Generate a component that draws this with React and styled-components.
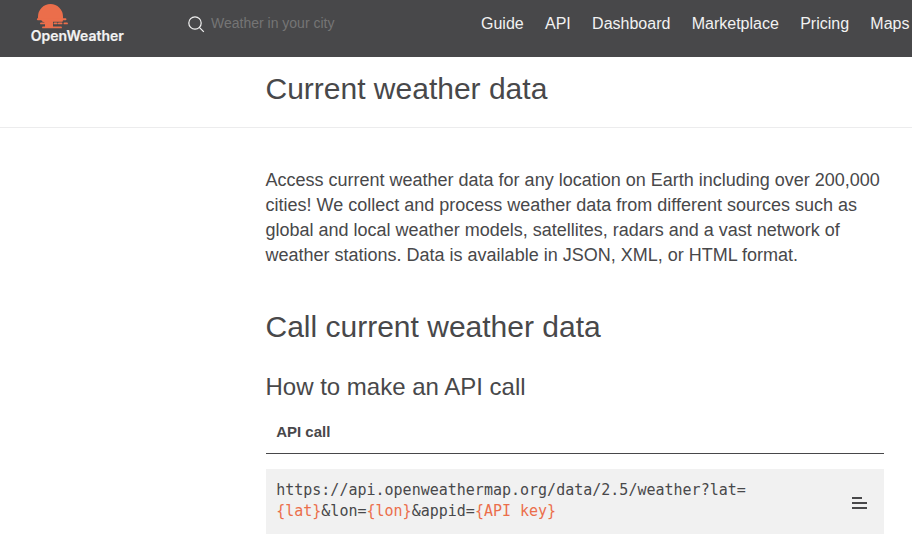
import React from "react";
import styled, { createGlobalStyle } from "styled-components";

const GlobalStyle = createGlobalStyle`
  * { box-sizing: border-box; }
  body { margin: 0; background: #fff; color: #48484a; font-family: "Liberation Sans", Arial, sans-serif; overflow: hidden; }
  h1, h2, h3, p, pre { margin: 0; font-weight: 400; }
`;
const Header = styled.header`
  display: flex; align-items: flex-start; width: 912px; height: 57px; background: #48484a; overflow: hidden;
`;
const Logo = styled.a`
  display: block; width: 100px; height: 52px; margin-left: 30px; flex: none;
  svg { display: block; overflow: visible; }
`;
const Search = styled.div`
  display: flex; gap: 6px; margin: 15px 0 0 58px; width: 293px; flex: none;
  svg { display: block; margin-top: 1px; }
`;
const Placeholder = styled.span`
  font-size: 14px; line-height: 16px; color: #757575;
`;
const Nav = styled.nav`
  display: flex; flex: none; gap: 21.3px; padding-top: 15px;
`;
const NavLink = styled.a`
  color: #f2f2f2; font-size: 16px; line-height: 18px; white-space: nowrap;
`;
const TitleBar = styled.div`
  height: 71px; padding: 14px 0 0 265.5px; border-bottom: 1px solid #ececed;
`;
const Title = styled.h1`
  font-size: 30px; line-height: 36px;
`;
const Content = styled.main`
  width: 618.5px; margin: 40px 0 0 265.5px;
`;
const Intro = styled.p`
  font-size: 18px; line-height: 25px; white-space: pre;
`;
const Section = styled.h2`
  font-size: 30px; line-height: 36px; margin-top: 41px;
`;
const SubSection = styled.h3`
  font-size: 24px; line-height: 30px; margin-top: 27px;
`;
const Tab = styled.div`
  height: 51px; margin-top: 1px; padding: 20px 10.7px 0; border-bottom: 1px solid #48484a;
  font-size: 15px; line-height: 17px; font-weight: 700;
`;
const CodeBlock = styled.div`
  display: flex; justify-content: space-between; height: 65px; margin-top: 15px; padding: 11px 17px 0 10.7px; background: #f1f1f1;
  svg { display: block; margin-top: 17px; }
`;
const Code = styled.pre`
  font-family: "DejaVu Sans Mono", monospace; font-size: 15px; line-height: 21px;
`;
const Param = styled.span`
  color: #eb6e4b;
`;

const links = ["Guide", "API", "Dashboard", "Marketplace", "Pricing", "Maps"];

export default function App() {
  return (
    <>
      <GlobalStyle />
      <Header>
        <Logo>
          <svg width="100" height="52" viewBox="0 0 100 52">
            <path fill="#eb6e4b" d="M8 18.500v-2a12.500 12.500 0 0 1 25 0v2l-1 2.500h-9v6h-8v-4l-4-3z" />
            <g stroke="#eb6e4b" strokeWidth="1.900" strokeLinecap="round" fill="none">
              <path d="M7.800 19.300H35.500M13 20.800H32M11 23.400h11M24.500 23.400h2.200M28.800 23.400h2.700M34.500 23.400h2.500M13 27.400h18" />
            </g>
            <text x="0.800" y="41" fill="#f2f2f2" stroke="#f2f2f2" strokeWidth=".2" fontFamily="Inter" fontSize="14.600" fontWeight="600" textLength="93" lengthAdjust="spacingAndGlyphs">OpenWeather</text>
          </svg>
        </Logo>
        <Search>
          <svg width="17" height="17" viewBox="0 0 17 17" fill="none" stroke="#f2f2f2" strokeWidth="1.2">
            <circle cx="7" cy="7" r="6.2" /><path d="m11.300 11.300 4.500 4.500" />
          </svg>
          <Placeholder>Weather in your city</Placeholder>
        </Search>
        <Nav>{links.map((l) => <NavLink key={l}>{l}</NavLink>)}</Nav>
      </Header>
      <TitleBar><Title>Current weather data</Title></TitleBar>
      <Content>
        <Intro>{`Access current weather data for any location on Earth including over 200,000
cities! We collect and process weather data from different sources such as
global and local weather models, satellites, radars and a vast network of
weather stations. Data is available in JSON, XML, or HTML format.`}</Intro>
        <Section>Call current weather data</Section>
        <SubSection>How to make an API call</SubSection>
        <Tab>API call</Tab>
        <CodeBlock>
          <Code>
            {"https://api.openweathermap.org/data/2.5/weather?lat=\n"}
            <Param>{"{lat}"}</Param>&amp;lon=<Param>{"{lon}"}</Param>&amp;appid=<Param>{"{API key}"}</Param>
          </Code>
          <svg width="15" height="12" viewBox="0 0 15 12" fill="#48484a">
            <rect width="10" height="2" /><rect y="5" width="15" height="2" /><rect y="10" width="15" height="2" />
          </svg>
        </CodeBlock>
      </Content>
    </>
  );
}
